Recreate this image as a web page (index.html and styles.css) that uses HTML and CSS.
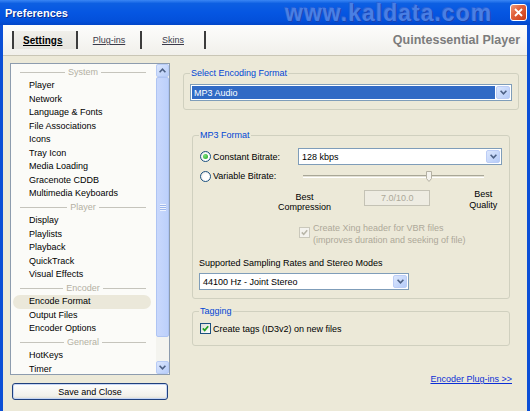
FILE: index.html
```html
<!DOCTYPE html>
<html lang="en">
<head>
  <meta charset="UTF-8">
  <title>Preferences</title>
  <link rel="stylesheet" href="styles.css">
</head>
<body>

  <div class="window">
    <div class="titlebar">
      <span class="title">Preferences</span>
      <span class="watermark">www.kaldata.com</span>
      <span class="close">
        <svg width="9" height="9" viewBox="0 0 9 9"><path d="M1 1 L8 8 M8 1 L1 8" stroke="#fff" stroke-width="1.8" fill="none"/></svg>
      </span>
    </div>

    <div class="frame">
      <div class="tabbar">
        <div class="tabs">
          <a class="tab selected">Settings</a>
          <a class="tab">Plug-ins</a>
          <a class="tab">Skins</a>
        </div>
        <span class="brand">Quintessential Player</span>
      </div>

      <div class="content">
        <!-- left column: settings pages -->
        <div class="sidebar">
          <div class="listbox">
            <div class="list">
              <div class="group">System</div>
              <div class="item">Player</div>
              <div class="item">Network</div>
              <div class="item">Language &amp; Fonts</div>
              <div class="item">File Associations</div>
              <div class="item">Icons</div>
              <div class="item">Tray Icon</div>
              <div class="item">Media Loading</div>
              <div class="item">Gracenote CDDB</div>
              <div class="item">Multimedia Keyboards</div>
              <div class="group">Player</div>
              <div class="item">Display</div>
              <div class="item">Playlists</div>
              <div class="item">Playback</div>
              <div class="item">QuickTrack</div>
              <div class="item">Visual Effects</div>
              <div class="group">Encoder</div>
              <div class="item active">Encode Format</div>
              <div class="item">Output Files</div>
              <div class="item">Encoder Options</div>
              <div class="group">General</div>
              <div class="item">HotKeys</div>
              <div class="item">Timer</div>
            </div>
            <div class="scrollbar">
              <div class="sb-btn">
                <svg width="7" height="5" viewBox="0 0 7 5"><path d="M0.6 4.2 L3.5 1.2 L6.4 4.2" stroke="#4d6185" stroke-width="1.6" fill="none"/></svg>
              </div>
              <div class="sb-thumb"><span class="grip"></span></div>
              <div class="sb-track"></div>
              <div class="sb-btn">
                <svg width="7" height="5" viewBox="0 0 7 5"><path d="M0.6 0.8 L3.5 3.8 L6.4 0.8" stroke="#4d6185" stroke-width="1.6" fill="none"/></svg>
              </div>
            </div>
          </div>
          <button class="btn">Save and Close</button>
        </div>

        <!-- right column: encode format page -->
        <div class="panel">
          <fieldset class="box top">
            <legend>Select Encoding Format</legend>
            <div class="combo selected-combo">
              <span class="combo-text">MP3 Audio</span>
              <span class="drop"><svg width="7" height="5" viewBox="0 0 7 5"><path d="M0.6 0.8 L3.5 3.8 L6.4 0.8" stroke="#4d6185" stroke-width="1.6" fill="none"/></svg></span>
            </div>
          </fieldset>

          <fieldset class="box inner mp3">
            <legend>MP3 Format</legend>
            <div class="row bitrate">
              <label class="opt"><span class="radio on"></span>Constant Bitrate:</label>
              <div class="combo">
                <span class="combo-text">128 kbps</span>
                <span class="drop"><svg width="7" height="5" viewBox="0 0 7 5"><path d="M0.6 0.8 L3.5 3.8 L6.4 0.8" stroke="#4d6185" stroke-width="1.6" fill="none"/></svg></span>
              </div>
            </div>
            <div class="row vbr">
              <label class="opt"><span class="radio"></span>Variable Bitrate:</label>
              <div class="slider">
                <span class="track"></span>
                <span class="knob">
                  <svg width="6" height="11" viewBox="0 0 6 11"><path d="M0.5 0.5 H5.5 V7.5 L3 10.5 L0.5 7.5 Z" fill="#f4f3ee" stroke="#b4b1a3"/></svg>
                </span>
              </div>
            </div>
            <div class="row quality">
              <span class="q-left">Best<br>Compression</span>
              <span class="q-value">7.0/10.0</span>
              <span class="q-right">Best<br>Quality</span>
            </div>
            <div class="row xing">
              <span class="check disabled">
                <svg width="7" height="7" viewBox="0 0 7 7"><path d="M0.8 3.4 L2.7 5.4 L6.2 1.2" stroke="#b8b6a8" stroke-width="1.6" fill="none"/></svg>
              </span>
              <span class="xing-text">Create Xing header for VBR files<br>(improves duration and seeking of file)</span>
            </div>
            <div class="rates-label">Supported Sampling Rates and Stereo Modes</div>
            <div class="combo rates">
              <span class="combo-text">44100 Hz - Joint Stereo</span>
              <span class="drop"><svg width="7" height="5" viewBox="0 0 7 5"><path d="M0.6 0.8 L3.5 3.8 L6.4 0.8" stroke="#4d6185" stroke-width="1.6" fill="none"/></svg></span>
            </div>
          </fieldset>

          <fieldset class="box inner tagging">
            <legend>Tagging</legend>
            <label class="opt">
              <span class="check">
                <svg width="7" height="7" viewBox="0 0 7 7"><path d="M0.8 3.4 L2.7 5.4 L6.2 1.2" stroke="#21a121" stroke-width="1.7" fill="none"/></svg>
              </span>Create tags (ID3v2) on new files
            </label>
          </fieldset>

          <div class="links">
            <a class="link">Encoder Plug-ins &gt;&gt;</a>
          </div>
        </div>
      </div>
    </div>
  </div>

</body>
</html>
```

FILE: styles.css
```css
* {
  box-sizing: border-box;
}

body {
  margin: 0;
  font-family: "Liberation Sans", Arial, sans-serif;
  font-size: 9px;
  color: #000;
}

.window {
  width: 530px;
  height: 411px;
  overflow: hidden;
  display: flex;
  flex-direction: column;
  background: #0b4fd6;
}

/* title bar */
.titlebar {
  flex: none;
  height: 25px;
  position: relative;
  display: flex;
  align-items: center;
  justify-content: space-between;
  padding: 0 3px 0 5px;
  background: linear-gradient(#3a86f4 0%, #0d5fe2 14%, #0556e2 50%, #0350da 84%, #0246c8 100%);
}
.title {
  color: #fff;
  font-weight: bold;
  font-size: 11px;
  text-shadow: 1px 1px #0b2f92;
}
.watermark {
  position: absolute;
  left: 285px;
  top: 0;
  font-size: 23px;
  line-height: 26px;
  font-weight: bold;
  letter-spacing: 1px;
  color: #4a7fe4;
  text-shadow: 1px 1px #1b45b2, -1px -1px #2a62d6;
}
.close {
  width: 17px;
  height: 17px;
  border: 1px solid #fff;
  border-radius: 3px;
  display: flex;
  align-items: center;
  justify-content: center;
  background: linear-gradient(135deg, #ee9a7c 0%, #e2623c 40%, #c83a16 100%);
}

.frame {
  flex: 1;
  margin: 0 3px;
  display: flex;
  flex-direction: column;
  background: #ece9d8;
}

/* tab strip */
.tabbar {
  flex: none;
  height: 31px;
  display: flex;
  align-items: center;
  padding: 0 7px 0 9px;
  background: linear-gradient(#fdfdfc, #f1f0eb);
  border-bottom: 1px solid #c9c6b6;
}
.tabs {
  display: flex;
  border-right: 2px solid #3c3c3c;
}
.tab {
  width: 64px;
  height: 18px;
  border-left: 2px solid #3c3c3c;
  display: flex;
  align-items: center;
  justify-content: center;
  color: #3b3b4a;
  text-decoration: underline;
}
.tab.selected {
  color: #000;
  font-weight: bold;
  font-size: 10px;
  background: linear-gradient(#f0efea, #e6e5df);
  justify-content: flex-start;
  padding-left: 9px;
}
.brand {
  margin-left: auto;
  font-size: 12.5px;
  font-weight: bold;
  color: #7c7c7c;
}

.content {
  flex: 1;
  display: flex;
  gap: 13px;
  padding: 7px 8px 0 7px;
}

/* left column */
.sidebar {
  width: 160px;
  display: flex;
  flex-direction: column;
}
.listbox {
  height: 312px;
  display: flex;
  border: 1px solid #8d9cae;
  background: #fbfbf8;
}
.list {
  flex: 1;
  padding-top: 1.5px;
}
.item {
  height: 13.5px;
  line-height: 13.5px;
  padding-left: 18px;
  white-space: nowrap;
}
.item.active {
  margin: 0 5px 0 2px;
  padding-left: 16px;
  border-radius: 7px;
  background: #ebe8da;
}
.group {
  height: 13.5px;
  display: flex;
  align-items: center;
  padding: 0 10px 0 9px;
  color: #b3b0a3;
}
.group::before,
.group::after {
  content: "";
  flex: 1;
  height: 1px;
  background: #c5c4bc;
}
.group::before {
  margin-right: 3px;
}
.group::after {
  margin-left: 3px;
}

.scrollbar {
  width: 13px;
  display: flex;
  flex-direction: column;
  background: #f4f4ef;
}
.sb-btn {
  height: 13px;
  display: flex;
  align-items: center;
  justify-content: center;
  border: 1px solid #b7cbf5;
  border-radius: 2px;
  background: linear-gradient(135deg, #dbe6fd, #b7cdf9);
}
.sb-thumb {
  height: 260px;
  display: flex;
  align-items: center;
  justify-content: center;
  border: 1px solid #aec4f3;
  border-radius: 2px;
  background: linear-gradient(90deg, #c9d8fc, #bcd0fb);
}
.grip {
  width: 6px;
  height: 7px;
  background: repeating-linear-gradient(#eef3fe 0 1px, #9cb6ec 1px 2px);
}
.sb-track {
  flex: 1;
}

.btn {
  margin: 8px 0 0 2px;
  width: 156px;
  height: 17px;
  padding: 0;
  font: inherit;
  color: #000;
  border: 1px solid #1f3f7c;
  border-radius: 3px;
  background: linear-gradient(#fefefe, #f1f0ea 80%, #dcdad0);
  box-shadow: inset 0 0 0 1px #c6d6f5;
}

/* right column */
.panel {
  width: 336px;
  padding-top: 5px;
  display: flex;
  flex-direction: column;
}
.box {
  margin: 0;
  padding: 0 6px 8px;
  border: 1px solid #d0d0bf;
  border-radius: 3px;
  min-width: 0;
}
.box legend {
  padding: 0 1px;
  line-height: 11px;
  color: #0046d5;
}
.box.inner {
  margin: 20px 9px 0 9px;
}
.box.tagging {
  margin-top: 7px;
  padding-bottom: 11px;
}

.combo {
  height: 17px;
  display: flex;
  align-items: center;
  border: 1px solid #7f9db9;
  background: #fff;
  padding: 1px;
}
.combo-text {
  flex: 1;
  padding-left: 2px;
  white-space: nowrap;
}
.selected-combo {
  margin-top: 5px;
}
.selected-combo .combo-text {
  height: 100%;
  display: flex;
  align-items: center;
  background: #316ac5;
  color: #fff;
}
.drop {
  width: 14px;
  height: 13px;
  margin-left: 1px;
  display: flex;
  align-items: center;
  justify-content: center;
  border: 1px solid #bccdf6;
  border-radius: 2px;
  background: linear-gradient(135deg, #dce7fd, #b5cbf8);
}

.row {
  display: flex;
  align-items: center;
}
.opt {
  display: flex;
  align-items: center;
  gap: 2px;
  white-space: nowrap;
}
.row .opt {
  width: 99px;
  flex: none;
}
.bitrate {
  margin-top: 7px;
}
.bitrate .combo {
  flex: 1;
  margin-right: 1px;
}
.vbr {
  margin-top: 4px;
  height: 14px;
}

.radio {
  width: 11px;
  height: 11px;
  margin-left: 1px;
  border: 1px solid #1c5180;
  border-radius: 50%;
  background: radial-gradient(circle at 60% 60%, #fff 0 40%, #dcdcd6 100%);
  display: flex;
  align-items: center;
  justify-content: center;
}
.radio.on::after {
  content: "";
  width: 5px;
  height: 5px;
  border-radius: 50%;
  background: radial-gradient(circle at 35% 35%, #7ae07a, #21a121);
}

.slider {
  position: relative;
  width: 181px;
  height: 11px;
  margin-left: 5px;
}
.track {
  position: absolute;
  left: 0;
  right: 0;
  top: 4px;
  height: 3px;
  border-top: 1px solid #a9a797;
  border-bottom: 1px solid #fff;
  background: #e3e1d5;
}
.knob {
  position: absolute;
  left: 123px;
  top: 0;
  line-height: 0;
}

.quality {
  margin-top: 7px;
  align-items: flex-start;
}
.q-left {
  width: 80px;
  margin: 1.5px 0 0 66px;
  line-height: 10px;
  text-align: center;
}
.q-value {
  width: 67px;
  height: 16px;
  margin-left: 20px;
  border: 1px solid #c4c2b5;
  background: #eeece2;
  color: #aca899;
  text-align: center;
  line-height: 14px;
}
.q-right {
  width: 40px;
  margin: -1px 0 0 33px;
  line-height: 11px;
  text-align: center;
}

.xing {
  margin-top: 10.5px;
  align-items: flex-start;
  padding-left: 100px;
}
.check {
  width: 11px;
  height: 11px;
  flex: none;
  border: 1px solid #1c5180;
  background: linear-gradient(135deg, #dcdcd6, #fff);
  display: flex;
  align-items: center;
  justify-content: center;
}
.check.disabled {
  margin-top: 5px;
  border-color: #cac8bb;
  background: #f4f3ee;
}
.xing-text {
  margin-left: 3px;
  line-height: 12px;
  color: #aca899;
}

.rates-label {
  margin-top: 12px;
  line-height: 11px;
}
.combo.rates {
  width: 210px;
  margin-top: 4px;
}
.mp3 {
  padding-bottom: 8px;
}

.tagging .opt {
  margin-top: 6px;
  margin-left: 1px;
}

.links {
  margin-top: 28px;
  padding-right: 7px;
  text-align: right;
}
.link {
  color: #0b2fd6;
  text-decoration: underline;
}
```
